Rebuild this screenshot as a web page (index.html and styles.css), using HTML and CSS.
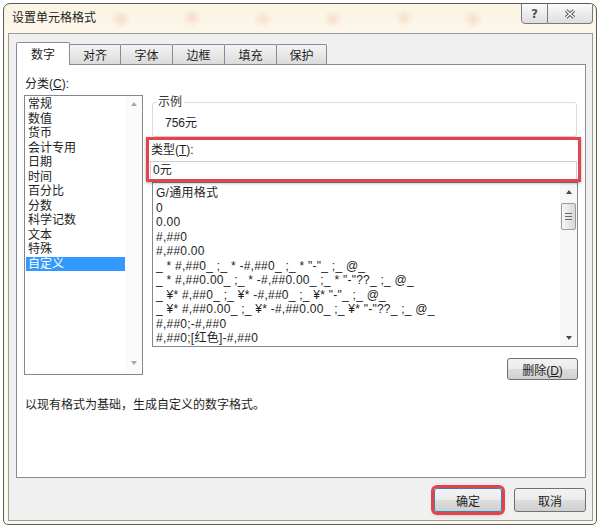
FILE: index.html
```html
<!DOCTYPE html>
<html lang="zh-CN">
  <head>
    <meta charset="UTF-8" />
    <meta name="viewport" content="width=device-width, initial-scale=1.0" />
    <title>设置单元格格式</title>
    <link rel="stylesheet" href="styles.css">
  </head>
  <body>
    <div class="window">
      <div class="titlebar">
        <span class="title">设置单元格格式</span>
        <div class="caption-buttons">
          <span class="cap-btn help">?</span>
          <span class="cap-btn close">
            <svg width="12" height="10" viewBox="0 0 12 10">
              <path d="M2 1.5 L10 8.5 M10 1.5 L2 8.5" stroke="#555" stroke-width="3.4" />
              <path d="M2 1.5 L10 8.5 M10 1.5 L2 8.5" stroke="#fff" stroke-width="1.4" />
            </svg>
          </span>
        </div>
      </div>

      <div class="frame">
        <div class="tabs">
          <span class="tab active" style="width:54px">数字</span>
          <span class="tab" style="width:52px">对齐</span>
          <span class="tab" style="width:53px">字体</span>
          <span class="tab" style="width:53px">边框</span>
          <span class="tab" style="width:53px">填充</span>
          <span class="tab" style="width:51px">保护</span>
        </div>

        <div class="panel">
          <div class="columns">
            <div class="category">
              <div class="label">分类(<u>C</u>):</div>
              <div class="listbox cat-list">
                <ul>
                  <li>常规</li>
                  <li>数值</li>
                  <li>货币</li>
                  <li>会计专用</li>
                  <li>日期</li>
                  <li>时间</li>
                  <li>百分比</li>
                  <li>分数</li>
                  <li>科学记数</li>
                  <li>文本</li>
                  <li>特殊</li>
                  <li class="selected">自定义</li>
                </ul>
                <div class="cat-scroll">
                  <span class="arrow up light"></span>
                  <span class="arrow down light"></span>
                </div>
              </div>
            </div>

            <div class="detail">
              <fieldset class="sample">
                <legend>示例</legend>
                <div class="sample-value">756元</div>
              </fieldset>

              <div class="type-box">
                <div class="type-label">类型(<u>T</u>):</div>
                <div class="type-input">0元</div>
              </div>

              <div class="listbox fmt-list">
                <ul>
                  <li>G/通用格式</li>
                  <li>0</li>
                  <li>0.00</li>
                  <li>#,##0</li>
                  <li>#,##0.00</li>
                  <li>_ * #,##0_ ;_ * -#,##0_ ;_ * "-"_ ;_ @_</li>
                  <li>_ * #,##0.00_ ;_ * -#,##0.00_ ;_ * "-"??_ ;_ @_</li>
                  <li>_ ¥* #,##0_ ;_ ¥* -#,##0_ ;_ ¥* "-"_ ;_ @_</li>
                  <li>_ ¥* #,##0.00_ ;_ ¥* -#,##0.00_ ;_ ¥* "-"??_ ;_ @_</li>
                  <li>#,##0;-#,##0</li>
                  <li>#,##0;[红色]-#,##0</li>
                </ul>
                <div class="fmt-scroll">
                  <span class="arrow-btn"><span class="arrow up"></span></span>
                  <span class="thumb"><i></i><i></i><i></i></span>
                  <span class="track"></span>
                  <span class="arrow-btn"><span class="arrow down"></span></span>
                </div>
              </div>

              <div class="btn-row">
                <button class="btn delete">删除(<u>D</u>)</button>
              </div>
            </div>
          </div>

          <p class="desc">以现有格式为基础，生成自定义的数字格式。</p>
        </div>

        <div class="footer">
          <button class="btn ok">确定</button>
          <button class="btn cancel">取消</button>
        </div>
      </div>
    </div>
  </body>
</html>
```

FILE: styles.css
```css
/* Base */
* {
  box-sizing: border-box;
}

body {
  margin: 0;
  padding: 3px 8px 0 3px;
  background: #ffffff;
  font-family: "Liberation Sans", "Noto Sans CJK SC", sans-serif;
  font-size: 12px;
  color: #1e1e1e;
}

u {
  text-decoration: underline;
  text-underline-offset: 1px;
}

/* Window chrome */
.window {
  width: 594px;
  height: 522px;
  border: 1px solid #5c5c5c;
  border-radius: 7px 7px 5px 5px;
  background:
    radial-gradient(ellipse 10px 9px at 117px 15px, rgba(235, 120, 100, 0.22), transparent),
    radial-gradient(ellipse 10px 9px at 188px 14px, rgba(235, 120, 100, 0.22), transparent),
    radial-gradient(ellipse 10px 9px at 259px 15px, rgba(235, 140, 90, 0.2), transparent),
    radial-gradient(ellipse 10px 9px at 329px 15px, rgba(235, 120, 100, 0.2), transparent),
    radial-gradient(ellipse 10px 9px at 400px 14px, rgba(235, 140, 90, 0.2), transparent),
    radial-gradient(ellipse 10px 9px at 469px 15px, rgba(235, 120, 100, 0.2), transparent),
    linear-gradient(#faf4e4, #fdf8ec 40px);
  display: flex;
  flex-direction: column;
  overflow: hidden;
}

.titlebar {
  height: 29px;
  flex-shrink: 0;
  display: flex;
  align-items: center;
  justify-content: space-between;
  padding-left: 8px;
}

.title {
  color: #222;
  margin-top: -4px;
}

.caption-buttons {
  align-self: flex-start;
  display: flex;
  margin-right: 3px;
  margin-top: -1px;
}

.cap-btn {
  height: 21px;
  display: flex;
  align-items: center;
  justify-content: center;
  border: 1px solid #7b7b7b;
  background: linear-gradient(#fbfbfb, #ececec 50%, #dedede);
}

.help {
  width: 27px;
  border-radius: 0 0 0 4px;
  font-family: "DejaVu Sans", sans-serif;
  font-weight: bold;
  font-size: 12px;
  color: #555;
}

.close {
  width: 45px;
  border-left: none;
  border-radius: 0 0 4px 0;
}

/* Dialog frame */
.frame {
  flex: 1;
  margin: 0 3px 3px 4px;
  border: 1px solid #9a9a9a;
  background: #f0f0f0;
  padding: 8px 6px 0 7px;
  display: flex;
  flex-direction: column;
}

.tabs {
  display: flex;
  align-items: flex-end;
  height: 23px;
  margin-bottom: -1px;
  position: relative;
  z-index: 1;
}

.tab {
  height: 20px;
  margin-bottom: 1px;
  margin-right: -1px;
  border: 1px solid #898c95;
  border-bottom: none;
  border-radius: 2px 2px 0 0;
  background: linear-gradient(#f4f4f4, #e8e8e8 50%, #dadada);
  display: flex;
  align-items: center;
  justify-content: center;
}

.tab.active {
  height: 23px;
  margin-bottom: 0;
  background: #ffffff;
  padding-bottom: 2px;
}

.panel {
  height: 414px;
  flex-shrink: 0;
  border: 1px solid #898c95;
  background: #ffffff;
  padding: 11px 4px 0 7px;
}

.columns {
  display: flex;
  gap: 3px;
}

/* Category list */
.category {
  width: 119px;
  flex-shrink: 0;
}

.label {
  height: 16px;
  line-height: 16px;
  margin-bottom: 3px;
  padding-left: 1px;
}

.listbox {
  display: flex;
  border: 1px solid #828790;
  background: #ffffff;
  overflow: hidden;
}

.listbox ul {
  flex: 1;
  min-width: 0;
  list-style: none;
  margin: 0;
  overflow: hidden;
  white-space: nowrap;
}

.cat-list {
  height: 280px;
}

.cat-list ul {
  padding: 1px 0 0 1px;
  line-height: 14.5px;
}

.cat-list li {
  padding-left: 2px;
}

.cat-list li.selected {
  background: #3399ff;
  color: #ffffff;
}

.cat-scroll {
  width: 17px;
  background: #fbfbfb;
  display: flex;
  flex-direction: column;
  justify-content: space-between;
  align-items: center;
  padding: 6px 0 9px;
}

.arrow {
  width: 0;
  height: 0;
  border-left: 3.5px solid transparent;
  border-right: 3.5px solid transparent;
}

.arrow.up {
  border-bottom: 4px solid #4a4a4a;
}

.arrow.down {
  border-top: 4px solid #4a4a4a;
}

.arrow.light.up {
  border-bottom-color: #a8a8a8;
}

.arrow.light.down {
  border-top-color: #a8a8a8;
}

/* Right side */
.detail {
  flex: 1;
  display: flex;
  flex-direction: column;
}

.sample {
  height: 43px;
  margin: 18px 4px 0 6px;
  border: 1px solid #dcdcdc;
  border-radius: 3px;
  padding: 0 0 0 12px;
  min-width: 0;
}

.sample legend {
  margin-left: -9px;
  padding: 0 2px;
  line-height: 16px;
  color: #333;
}

.sample-value {
  margin-top: 5px;
  line-height: 16px;
}

.type-box {
  border: 3px solid #e5434b;
  padding: 2px 1px 0;
  box-shadow: 0 1px 3px rgba(0, 0, 0, 0.35);
  position: relative;
  z-index: 1;
}

.type-label {
  line-height: 16px;
  margin-bottom: 3px;
  padding-left: 1px;
}

.type-input {
  height: 18px;
  border: 1px solid #cfcfcf;
  border-bottom: none;
  line-height: 17px;
  padding-left: 2px;
  background: #ffffff;
}

.fmt-list {
  height: 165px;
  margin: 0 3px 0 6px;
}

.fmt-list ul {
  padding: 3px 0 0 3px;
  line-height: 14.5px;
  letter-spacing: 0.25px;
}

.fmt-scroll {
  width: 17px;
  flex-shrink: 0;
  background: #f7f7f7;
  display: flex;
  flex-direction: column;
  align-items: center;
}

.arrow-btn {
  height: 17px;
  width: 17px;
  display: flex;
  align-items: center;
  justify-content: center;
}

.thumb {
  margin-top: 3px;
  width: 15px;
  height: 27px;
  border: 1px solid #9a9a9a;
  border-radius: 2px;
  background: linear-gradient(90deg, #f6f6f6, #e4e4e4 60%, #d9d9d9);
  display: flex;
  flex-direction: column;
  align-items: center;
  justify-content: center;
  gap: 2px;
}

.thumb i {
  display: block;
  width: 7px;
  height: 1px;
  background: #6a6a6a;
}

.track {
  flex: 1;
}

.btn-row {
  display: flex;
  justify-content: flex-end;
  margin: 11px 3px 0 0;
}

.btn {
  height: 22px;
  padding: 0;
  border: 1px solid #707070;
  border-radius: 3px;
  background: linear-gradient(#f3f3f3, #ebebeb 50%, #dddddd 51%, #cfcfcf);
  font: inherit;
  color: #222;
}

.delete {
  width: 71px;
}

.desc {
  margin: 17px 0 0 1px;
  line-height: 16px;
}

/* Footer buttons */
.footer {
  display: flex;
  justify-content: flex-end;
  gap: 12px;
  padding-top: 10px;
}

.footer .btn {
  height: 24px;
}

.ok {
  width: 68px;
  border-color: #3c7fb1;
  box-shadow: 0 0 0 3px #e5434b, 0 2px 5px rgba(0, 0, 0, 0.3);
}

.cancel {
  width: 72px;
}
```
